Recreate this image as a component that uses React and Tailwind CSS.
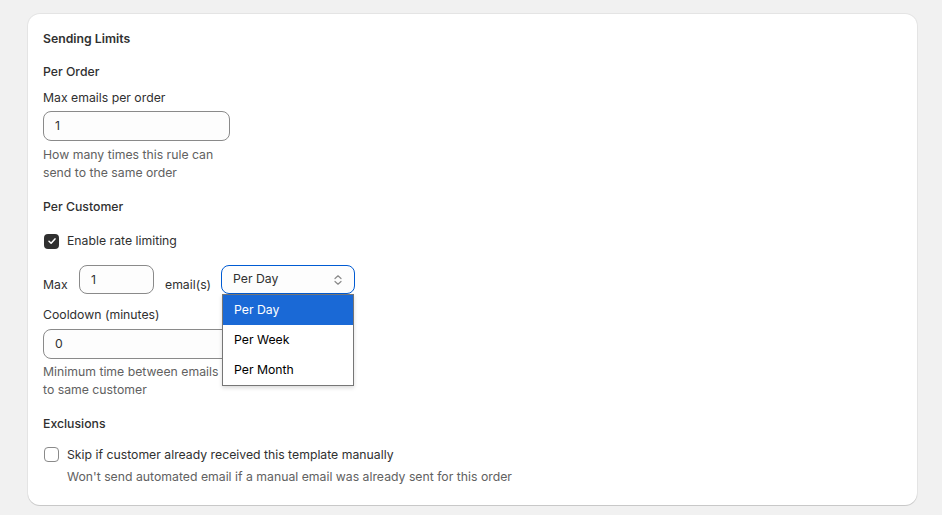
import React from 'react';

function Field({ value, className = '' }) {
  return (
    <div
      className={`flex items-center px-[11px] rounded-lg border border-[#8a8a8a] bg-[#fdfdfd] text-[12.25px] text-[#303030] ${className}`}
    >
      {value}
    </div>
  );
}

function Helper({ children }) {
  return <p className="text-[12.25px] leading-[18px] text-[#616161]">{children}</p>;
}

export default function App() {
  const options = ['Per Day', 'Per Week', 'Per Month'];

  return (
    <div
      className="min-h-[515px] bg-[#f1f1f1] pt-[14px] pl-[28px] pr-[25px] pb-[11px]"
      style={{ fontFamily: 'Inter, "Noto Sans", sans-serif' }}
    >
      <div className="bg-white rounded-xl shadow-[0_1px_0_rgba(0,0,0,0.12),0_0_0_1px_rgba(0,0,0,0.05)] pl-[15px] pr-4 pt-[16px] pb-[19px] text-[12.25px] text-[#303030]">
        <h2 className="font-semibold leading-[18px]">Sending Limits</h2>

        <h3 className="mt-[15px] font-medium leading-[18px]">Per Order</h3>
        <label className="block mt-[8px] leading-[18px]">Max emails per order</label>
        <Field value="1" className="mt-[4px] h-[30px] w-[187px]" />
        <div className="mt-[5px] w-[187px]">
          <Helper>How many times this rule can send to the same order</Helper>
        </div>

        <h3 className="mt-[16px] font-medium leading-[18px]">Per Customer</h3>

        <div className="mt-[16px] flex items-center gap-[8px] leading-[18px]">
          <span className="w-[15px] h-[15px] rounded-[4px] bg-[#303030] flex items-center justify-center ml-px">
            <svg width="10" height="10" viewBox="0 0 10 10" fill="none">
              <path d="M2 5.2 4.1 7.2 8 2.9" stroke="white" strokeWidth="1.5" strokeLinecap="round" strokeLinejoin="round" />
            </svg>
          </span>
          <span>Enable rate limiting</span>
        </div>

        <div className="mt-[15px] flex items-center h-[29px]">
          <span className="w-[36px] pt-[11px] leading-[18px]">Max</span>
          <Field value="1" className="h-[29px] w-[75px] items-start pt-[5px]" />
          <span className="ml-[11px] w-[56px] pt-[11px] leading-[18px]">email(s)</span>
          <div className="relative">
            <div className="w-[134px] h-[29px] rounded-lg border-[1.5px] border-[#005bd3] bg-[#fdfdfd] flex items-center justify-between pl-[11px] pr-[11px]">
              <span>Per Day</span>
              <svg width="10" height="12" viewBox="0 0 10 12" fill="none">
                <path d="M2 4.5 5 1.8 8 4.5M2 7.5 5 10.2 8 7.5" stroke="#8a8a8a" strokeWidth="1.2" strokeLinecap="round" strokeLinejoin="round" />
              </svg>
            </div>
            <ul className="absolute z-10 left-px top-[29px] w-[132px] bg-white border border-[#767676] shadow-[0_2px_4px_rgba(0,0,0,0.15)]">
              {options.map((o, i) => (
                <li
                  key={o}
                  className={`h-[30px] flex items-center pl-[11px] text-[12.25px] ${
                    i === 0 ? 'bg-[#1a69d6] text-white' : 'text-black'
                  }`}
                >
                  {o}
                </li>
              ))}
            </ul>
          </div>
        </div>

        <label className="block mt-[12px] leading-[18px]">Cooldown (minutes)</label>
        <Field value="0" className="mt-[5px] h-[30px] w-[187px]" />
        <div className="mt-[4px] w-[187px]">
          <Helper>Minimum time between emails to same customer</Helper>
        </div>

        <h3 className="mt-[16px] font-medium leading-[18px]">Exclusions</h3>

        <div className="mt-[13px] flex items-start gap-[8px]">
          <span className="mt-px ml-px w-[15px] h-[15px] rounded-[4px] border border-[#8a8a8a] bg-white shrink-0" />
          <div>
            <p className="leading-[18px]">Skip if customer already received this template manually</p>
            <div className="mt-[4px]">
              <Helper>Won't send automated email if a manual email was already sent for this order</Helper>
            </div>
          </div>
        </div>
      </div>
    </div>
  );
}
